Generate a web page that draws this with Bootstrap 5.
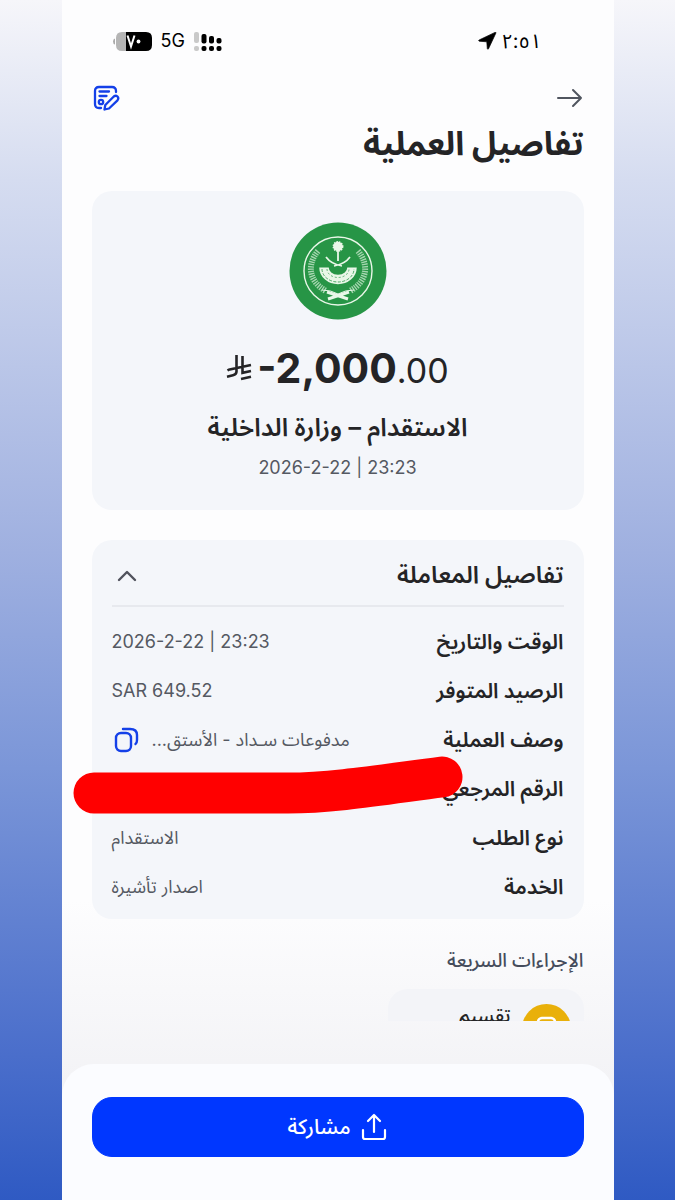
<!DOCTYPE html>
<html lang="ar" dir="rtl">
<head>
<meta charset="utf-8">
<meta name="viewport" content="width=device-width, initial-scale=1">
<title>تفاصيل العملية</title>
<link href="https://cdn.jsdelivr.net/npm/bootstrap@5.3.0/dist/css/bootstrap.min.css" rel="stylesheet">
<style>
body{font-family:Inter,"Noto Sans Arabic","Noto Sans","DejaVu Sans",sans-serif;color:#242426;background:linear-gradient(#f6f6fa 0,#d5dcf0 15%,#9fb0e0 46%,#7b96d8 64%,#4a6ecb 88%,#2f5ac3 100%);min-height:100vh}
.phone{max-width:552px;min-height:100vh;background:linear-gradient(#fdfdfe 0,#fdfdfe 900px,#f3f3f6 1080px)}
.ink-grey{color:#555962}
.status{padding:28px 72px 0 51px;height:54px;font-size:20px;line-height:26px;color:#000}
.network{font-size:18px}
.signal-gap{gap:9px}
.side{padding-left:30px;padding-right:30px}
.icon-btn{background:none;border:0;padding:0;line-height:0}
.topbar{padding-top:30px;height:60px}
.title{font-size:33px;line-height:44px;font-weight:700;margin:7px 0 26px}
.panel{background:#f4f6fa;border-radius:20px}
.hero{padding:31px 20px 30px}
.amount{margin-top:20px;line-height:56px;font-size:41px;font-weight:700}
.amount .cents{font-size:34px;font-weight:400}
.payee{font-size:25px;line-height:32px;margin-top:12px;font-weight:600}
.stamp{font-size:18px;line-height:24px;margin-top:13px}
.details{margin-top:30px;padding:4px 20px 8px}
.details h2{font-size:24px;line-height:32px;font-weight:600}
.details-head{height:63px;border-bottom:2px solid #e7e9ee;margin-bottom:10px}
.pair{height:49px}
.pair dt{font-size:21px;line-height:28px;font-weight:600}
.pair dd{font-size:18px;line-height:28px}
.scribble{position:absolute;left:-40px;top:-9px;pointer-events:none}
.quick{font-size:19px;line-height:28px;font-weight:500;margin:28px 0 14px;color:#454c5b}
.tile{width:196px;height:32px;border-radius:20px 20px 0 0;background:#f3f4f8;padding:15px 13px 0;gap:11px;font-size:19px;line-height:24px;font-weight:500}
.sheet{background:#fbfcff;border-radius:32px 32px 0 0;padding:33px 30px 43px}
.share{--bs-btn-bg:#0037ff;--bs-btn-border-color:#0037ff;--bs-btn-hover-bg:#002fe0;height:60px;border-radius:20px;font-size:21px;font-weight:500;gap:9px}
</style>
</head>
<body>
<div class="phone mx-auto d-flex flex-column">
  <header>
    <div class="status d-flex justify-content-between align-items-center">
      <div class="d-flex align-items-center gap-1">
        <span>٢:٥١</span>
        <svg width="19" height="18" viewBox="0 0 19 18"><path d="M18 .8 10.500 16.800q-.8 1-1.200-.2L8.800 9.800 1.300 9.200q-1.300-.5-.2-1.200L17 .4q1-.3 1 .4Z" fill="#000" stroke="#000" stroke-width=".7"/></svg>
      </div>
      <div class="d-flex align-items-center signal-gap">
        <svg width="28" height="19" viewBox="0 0 28 19"><g fill="#c9c9c9"><rect width="5" height="11" rx="2"/><rect y="14" width="5" height="5" rx="2"/></g><g fill="#000"><rect x="7.500" y="2" width="5" height="9.500" rx="2"/><rect x="15" y="4" width="5" height="7.500" rx="2"/><rect x="22.500" y="6" width="5" height="5.500" rx="2"/><rect x="7.500" y="14" width="5" height="5" rx="2"/><rect x="15" y="14" width="5" height="5" rx="2"/><rect x="22.500" y="14" width="5" height="5" rx="2"/></g></svg>
        <span class="network" dir="ltr">5G</span>
        <svg width="39" height="19" viewBox="0 0 39 19"><path d="M2 6.500v6Q0 12 0 9.500T2 6.500Z" fill="#aaa"/><path d="M14 0H9Q3 0 3 6v7q0 6 6 6h5Z" fill="#b5b5b5"/><path d="M13 0h20q6 0 6 6v7q0 6-6 6H13Z" fill="#000"/><path d="m14.500 3.500 3.500 11 3.500-11" fill="none" stroke="#fff" stroke-width="2"/><circle cx="25.500" cy="9.500" r="1.900" fill="#fff"/></svg>
      </div>
    </div>
    <div class="side">
      <div class="topbar d-flex justify-content-between align-items-start">
        <button class="icon-btn" aria-label="رجوع"><svg width="28" height="28" viewBox="0 0 28 28" fill="none" stroke="#50555f" stroke-width="2" stroke-linecap="round" stroke-linejoin="round"><path d="M2 14h23M17 6l8 8-8 8"/></svg></button>
        <button class="icon-btn" aria-label="تعديل"><svg width="28" height="28" viewBox="0 0 28 28" fill="none" stroke="#1440e8" stroke-width="2.300" stroke-linecap="round" stroke-linejoin="round"><path d="M24 8V7q0-4-4-4H7Q3 3 3 7v13q0 4 4 4h2M7.500 7.500H17M7.500 12h7"/><circle cx="9" cy="18" r="2.200"/><path d="m12.500 25.500.8-4.500 8.500-8.500q2-1.500 3.700 0 1.600 1.800 0 3.800L17 24.500Z"/></svg></button>
      </div>
      <h1 class="title">تفاصيل العملية</h1>
    </div>
  </header>
  <main class="side">
    <section class="panel hero text-center">
      <svg width="98" height="98" viewBox="0 0 98 98" class="d-block mx-auto" role="img" aria-label="وزارة الداخلية">
        <circle cx="49" cy="49" r="48.500" fill="#279546"/>
        <g fill="none" stroke="#e9f7e8">
          <circle cx="49" cy="49" r="34" stroke-width="1.400"/>
          <path d="M29 29C18 42 19 59 37 69M69 29C80 42 79 59 61 69" stroke-width="6" stroke-dasharray="1.400 1" opacity=".65"/>
          <path d="M35 45.500a14 12 0 0 0 28 0" stroke-width="9.500"/>
          <path d="M33 47a16 13 0 0 0 32 0" stroke="#279546" stroke-width=".8" stroke-dasharray="3 1.500"/>
          <path d="M38 47a11 8.500 0 0 0 22 0" stroke="#279546" stroke-width=".7" stroke-dasharray="2 2"/>
          <path d="M49 26v13" stroke-width="1.800"/>
          <path d="M37 35q5 7 16 9M61 35q-5 7-16 9" stroke-width="1.700"/>
          <path d="m39 77 21-7M59 77l-21-7" stroke-width="3"/><path d="M33 68q9 0 16 4 7-4 16-4" stroke-width="1"/>
        </g>
        <circle cx="49" cy="24.500" r="4.700" fill="#e9f7e8" stroke="#e9f7e8" stroke-width="1.500" stroke-dasharray="1.500 1"/>
      </svg>
      <div class="amount d-flex justify-content-center align-items-baseline" dir="ltr">
        <svg class="me-1" width="27" height="29" viewBox="0 0 27 29" fill="none" stroke="#242426" stroke-width="2.600" role="img" aria-label="ريال"><path d="M10.500 1v16.500q0 3-3.500 3.800L1 22.700M2.500 15.800 25 11M16.500 2v16.800L25 17M1.500 16.500 3 15.600M15 25l10-2.200"/></svg>
        <span>-2,000</span><span class="cents">.00</span>
      </div>
      <div class="payee">الاستقدام – وزارة الداخلية</div>
      <div class="stamp ink-grey" dir="ltr">2026-2-22 | 23:23</div>
    </section>

    <section class="panel details">
      <div class="details-head d-flex justify-content-between align-items-center">
        <h2 class="m-0">تفاصيل المعاملة</h2>
        <button class="icon-btn" aria-label="طي التفاصيل"><svg width="28" height="28" viewBox="0 0 28 28" fill="none" stroke="#50525c" stroke-width="2.400" stroke-linecap="round" stroke-linejoin="round"><path d="m7 19 8-8 8 8"/></svg></button>
      </div>
      <dl class="m-0">
        <div class="pair d-flex justify-content-between align-items-center"><dt>الوقت والتاريخ</dt><dd class="m-0 ink-grey" dir="ltr">2026-2-22 | 23:23</dd></div>
        <div class="pair d-flex justify-content-between align-items-center"><dt>الرصيد المتوفر</dt><dd class="m-0 ink-grey" dir="ltr">SAR 649.52</dd></div>
        <div class="pair d-flex justify-content-between align-items-center"><dt>وصف العملية</dt><dd class="m-0 ink-grey d-flex align-items-center gap-2"><span>مدفوعات سـداد - الأستق...</span><button class="icon-btn" aria-label="نسخ"><svg width="32" height="28" viewBox="0 0 32 28" fill="none" stroke="#1440e8" stroke-width="2.400" stroke-linecap="round" stroke-linejoin="round"><rect x="4" y="7" width="15" height="18" rx="5"/><path d="M11 3h7q7 0 7 6v5q0 3-1.500 4"/></svg></button></dd></div>
        <div class="pair d-flex justify-content-between align-items-center position-relative"><dt>الرقم المرجعي</dt><dd class="m-0"></dd>
          <svg class="scribble" width="392" height="62" viewBox="0 0 392 62" fill="none" stroke="#f00" stroke-width="41" stroke-linecap="round" aria-hidden="true"><path d="M22 38H216C262 38 315 29 370 22"/></svg></div>
        <div class="pair d-flex justify-content-between align-items-center"><dt>نوع الطلب</dt><dd class="m-0 ink-grey">الاستقدام</dd></div>
        <div class="pair d-flex justify-content-between align-items-center"><dt>الخدمة</dt><dd class="m-0 ink-grey">اصدار تأشيرة</dd></div>
      </dl>
    </section>

    <h2 class="quick">الإجراءات السريعة</h2>
    <div class="tile d-flex overflow-hidden">
      <svg class="flex-shrink-0" width="49" height="49" viewBox="0 0 49 49"><circle cx="24.500" cy="24.500" r="24.500" fill="#e9b00a"/><rect x="16" y="14" width="17" height="20" rx="4" fill="none" stroke="#fff" stroke-width="2.500"/></svg>
      <span>تقسيم</span>
    </div>
  </main>
  <footer class="sheet mt-auto">
    <button class="btn btn-primary share w-100 d-flex justify-content-center align-items-center">
      <svg width="28" height="28" viewBox="0 0 28 28" fill="none" stroke="#fff" stroke-width="2.200" stroke-linecap="round" stroke-linejoin="round"><path d="M3 17v7q0 2 2 2h18q2 0 2-2v-7M14 19V2M8 8l6-6 6 6"/></svg>
      <span>مشاركة</span>
    </button>
  </footer>
</div>
<script src="https://cdn.jsdelivr.net/npm/bootstrap@5.3.0/dist/js/bootstrap.bundle.min.js"></script>
</body>
</html>
